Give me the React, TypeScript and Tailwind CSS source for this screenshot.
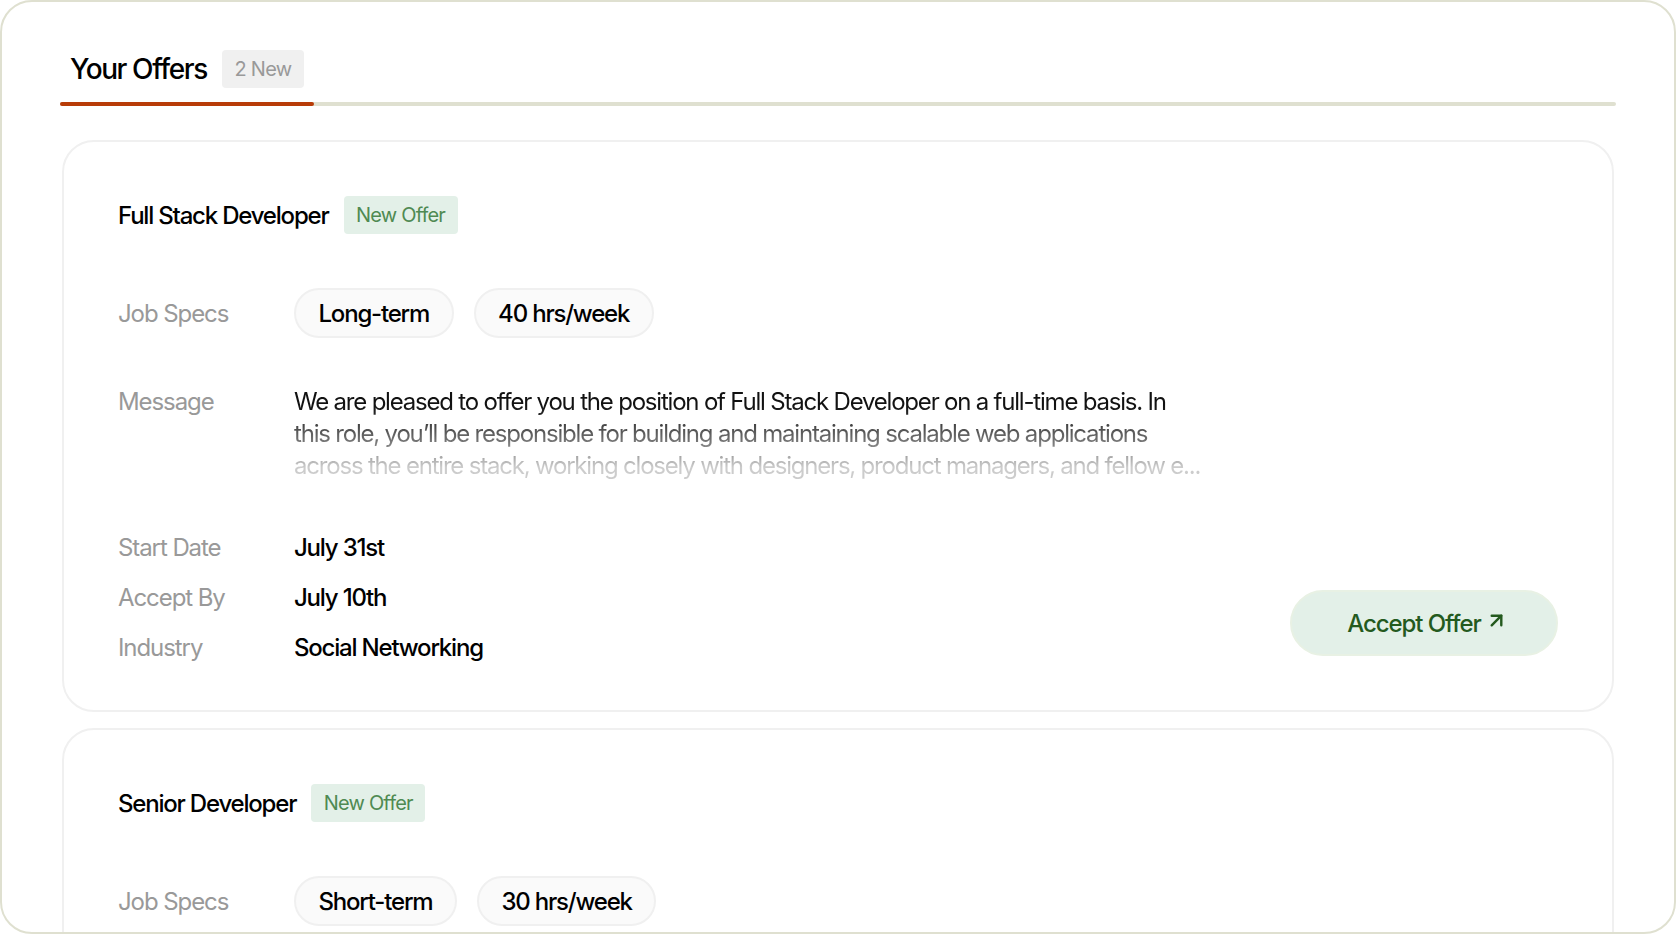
import { ArrowUpRight } from 'lucide-react';

const offers = [
  {
    title: 'Full Stack Developer',
    specs: ['Long-term', '40 hrs/week'],
    message:
      'We are pleased to offer you the position of Full Stack Developer on a full-time basis. In this role, you’ll be responsible for building and maintaining scalable web applications across the entire stack, working closely with designers, product managers, and fellow e...',
    start: 'July 31st',
    acceptBy: 'July 10th',
    industry: 'Social Networking',
  },
  {
    title: 'Senior Developer',
    specs: ['Short-term', '30 hrs/week'],
    message:
      'We are pleased to offer you the position of Senior Developer on a short-term basis. In this role, you’ll be responsible for building and maintaining scalable web applications across the entire stack, working closely with designers, product managers, and fellow e...',
    start: 'August 15th',
    acceptBy: 'July 20th',
    industry: 'Fintech',
  },
];

function Label({ children, className }: { children: string; className?: string }) {
  return <div className={`w-[176px] shrink-0 tracking-[-0.045em] text-[#999999] ${className ?? ''}`}>{children}</div>;
}

export default function App() {
  return (
    <div className="h-[934px] overflow-hidden rounded-[32px] border-2 border-[#dfe0d0] bg-white px-[58px] pt-[48px] font-['Inter',sans-serif] text-[24px] leading-[32px] tracking-[-0.05em] text-black">
      <div className="flex items-center pl-[10px] pb-[14px]">
        <h1 className="text-[28px] leading-[38px] font-medium tracking-[-0.05em]">Your Offers</h1>
        <span className="ml-[15px] rounded-[4px] bg-[#f0f0f0] px-[12.5px] text-[20px] leading-[38px] tracking-[-0.035em] text-[#999999]">2 New</span>
      </div>
      <div className="h-1 rounded-full bg-[#dfe0d0]">
        <div className="h-full w-[254px] rounded-full bg-[#b83c08]" />
      </div>

      <div className="mt-[34px] flex flex-col gap-[16px] px-[2px]">
        {offers.map((offer) => (
          <div key={offer.title} className="rounded-[32px] border-2 border-[#f0f0f0] px-[54px] pt-[54px] pb-[46px]">
            <div className="flex items-center">
              <h2 className="pt-[2px] font-[450]">{offer.title}</h2>
              <span className="ml-[15px] rounded-[4px] bg-[#e3f0e8] px-[12.5px] text-[20px] leading-[38px] tracking-[-0.04em] text-[#4f8a52]">New Offer</span>
            </div>

            <div className="mt-[54px] flex items-center">
              <Label className="mt-[2px]">Job Specs</Label>
              <div className="flex gap-[20px]">
                {offer.specs.map((spec) => (
                  <span key={spec} className="h-[50px] rounded-full border-2 border-[#f0f0f0] bg-[#fafafa] px-[22.5px] leading-[48px] font-[450]">
                    {spec}
                  </span>
                ))}
              </div>
            </div>

            <div className="mt-[48px] flex">
              <Label>Message</Label>
              <p className="w-[910px] bg-gradient-to-b from-[#111111] from-[20%] to-[#cccccc] to-[85%] bg-clip-text text-transparent">
                {offer.message}
              </p>
            </div>

            <div className="mt-[50px] flex items-end justify-between">
              <div className="flex flex-col gap-[18px]">
                <div className="flex">
                  <Label>Start Date</Label>
                  <div className="font-[450]">{offer.start}</div>
                </div>
                <div className="flex">
                  <Label>Accept By</Label>
                  <div className="font-[450]">{offer.acceptBy}</div>
                </div>
                <div className="flex">
                  <Label>Industry</Label>
                  <div className="font-[450]">{offer.industry}</div>
                </div>
              </div>
              <button className="mb-[8px] flex h-[66px] w-[268px] items-center justify-center gap-[4px] rounded-full border-2 border-[#e8f1e4] bg-[#e3f0e8] pt-[2px] pl-[7px] font-[450] tracking-[-0.045em] text-[#245a1e]">
                Accept Offer
                <ArrowUpRight size={23} strokeWidth={2.5} className="-mt-[8px]" />
              </button>
            </div>
          </div>
        ))}
      </div>
    </div>
  );
}
